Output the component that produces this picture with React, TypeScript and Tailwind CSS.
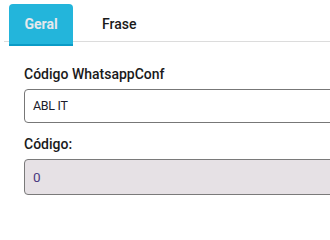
export default function App() {
  return (
    <div className="w-[330px] h-[202px] overflow-hidden bg-white font-['Roboto',sans-serif]">
      {/* Tabs */}
      <div className="ml-[4px] h-[42px] border-b border-[#dcdcdc] flex items-start">
        <button className="mt-[4px] ml-[5px] h-[42px] w-[64px] rounded-t-[4px] bg-[#23b5db] border-b-[2px] border-[#0b9bc6] text-[14px] font-bold text-[#e6e8ec] flex items-start justify-center pt-[10px]">
          Geral
        </button>
        <button className="mt-[4px] ml-[29px] h-[38px] text-[14px] font-medium text-[#1a1a1a] flex items-start pt-[10px]">
          Frase
        </button>
      </div>

      {/* Form */}
      <div className="pl-[24px] pt-[22px]">
        <label className="block text-[14px] leading-[20px] font-medium text-[#1a1a1a]">
          Código WhatsappConf
        </label>
        <div className="mt-[5px] h-[34px] rounded-[4px] border border-[#777] bg-white flex items-center pl-[8px] mr-[-10px]">
          <span className="text-[12.5px] text-[#1c1c2a] tracking-[-0.3px]">ABL IT</span>
        </div>

        <label className="block mt-[11px] text-[14px] leading-[20px] font-medium text-[#1a1a1a]">
          Código:
        </label>
        <div className="mt-[5px] h-[36px] rounded-[4px] border border-[#7a7a7a] bg-[#e6e1e5] flex items-center pl-[8px] mr-[-10px]">
          <span className="text-[13.5px] text-[#4a3a80]">0</span>
        </div>
      </div>
    </div>
  );
}
